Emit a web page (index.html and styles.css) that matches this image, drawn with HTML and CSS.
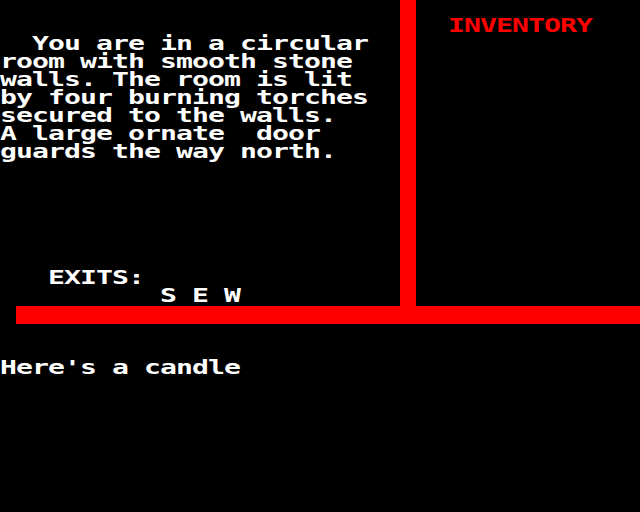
FILE: index.html
```html
<!DOCTYPE html>
<html>
<head>
<meta charset="utf-8">
<link rel="stylesheet" href="styles.css">
</head>
<body>
<div class="screen">
  <div class="top">
    <div class="room"><pre class="txt">  You are in a circular
room with smooth stone
walls. The room is lit
by four burning torches
secured to the walls.
A large ornate  door
guards the way north.






   EXITS:
          S E W</pre></div>
    <div class="vbar"></div>
    <div class="inv"><pre class="txt red">INVENTORY</pre></div>
  </div>
  <div class="hbar"></div>
  <div class="bottom"><pre class="txt">Here's a candle</pre></div>
</div>
</body>
</html>
```
FILE: styles.css
```css
html, body {
  margin: 0;
  padding: 0;
  background: #000;
}
.screen {
  width: 640px;
  height: 512px;
  overflow: hidden;
  background: #000;
  position: relative;
}
.top {
  display: flex;
  height: 306px;
}
.room {
  width: 400px;
  padding-top: 34px;
  box-sizing: border-box;
}
.vbar {
  width: 16px;
  background: #ff0000;
}
.inv {
  flex: 1;
  padding-left: 32px;
  padding-top: 16px;
  box-sizing: border-box;
}
.hbar {
  margin-left: 16px;
  height: 18px;
  background: #ff0000;
}
.bottom {
  padding-top: 34px;
}
.txt {
  margin: 0;
  font-family: "DejaVu Sans Mono", monospace;
  font-weight: bold;
  font-size: 19px;
  line-height: 18px;
  letter-spacing: -0.63px;
  color: #fff;
  white-space: pre;
  transform: scaleX(1.48);
  transform-origin: 0 0;
}
.red {
  color: #ff0000;
}
```
